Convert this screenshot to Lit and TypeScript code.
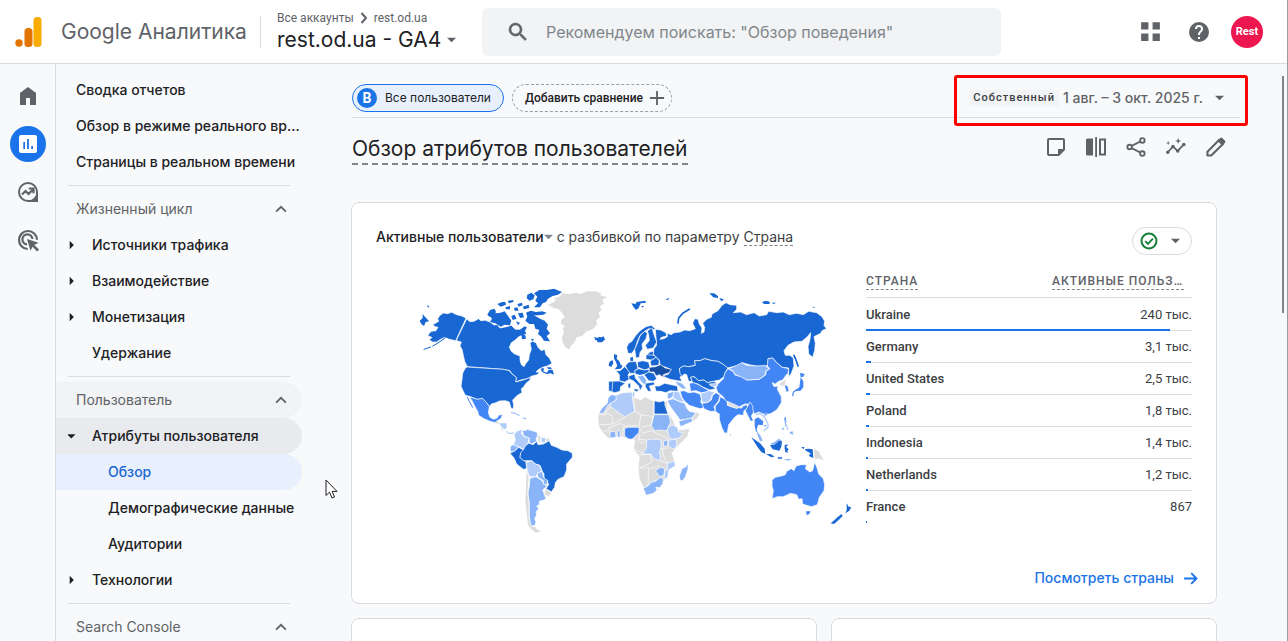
import { LitElement, html, css, svg } from "lit";
import { customElement, property } from "lit/decorators.js";
import { classMap } from "lit/directives/class-map.js";

type NavItem = { label: string; level: number; caret?: "right" | "down"; state?: string };
type NavGroup = { title?: string; active?: boolean; items: NavItem[] };

const NAV: NavGroup[] = [
  {
    items: [
      { label: "Сводка отчетов", level: 0 },
      { label: "Обзор в режиме реального времени", level: 0 },
      { label: "Страницы в реальном времени", level: 0 },
    ],
  },
  {
    title: "Жизненный цикл",
    items: [
      { label: "Источники трафика", level: 1, caret: "right" },
      { label: "Взаимодействие", level: 1, caret: "right" },
      { label: "Монетизация", level: 1, caret: "right" },
      { label: "Удержание", level: 1 },
    ],
  },
  {
    title: "Пользователь",
    active: true,
    items: [
      { label: "Атрибуты пользователя", level: 1, caret: "down", state: "open" },
      { label: "Обзор", level: 2, state: "current" },
      { label: "Демографические данные", level: 2 },
      { label: "Аудитории", level: 2 },
      { label: "Технологии", level: 1, caret: "right" },
    ],
  },
  { title: "Search Console", items: [] },
];

const COUNTRIES = [
  { name: "Ukraine", value: "240 тыс.", share: 93.3 },
  { name: "Germany", value: "3,1 тыс.", share: 1.4 },
  { name: "United States", value: "2,5 тыс.", share: 1.1 },
  { name: "Poland", value: "1,8 тыс.", share: 0.9 },
  { name: "Indonesia", value: "1,4 тыс.", share: 0.7 },
  { name: "Netherlands", value: "1,2 тыс.", share: 0.6 },
  { name: "France", value: "867", share: 0.4 },
];

@customElement("world-map")
class WorldMap extends LitElement {
  static styles = css`
    :host { display: block; }
    svg { display: block; width: 100%; height: auto; }
    path { stroke: #fff; stroke-width: 2; stroke-linejoin: round; }
    .d { fill: #1967d2; }
    .n { fill: #174ea6; }
    .b { fill: #4285f4; }
    .m { fill: #8ab4f8; }
    .l { fill: #aecbfa; }
    .g { fill: #dcdcdc; }
    .w { fill: #fff; }
    .bare { stroke: none; }
    .line { fill: none; stroke-linecap: round; stroke-width: 4; }
    .thin { stroke-width: 3; }
    .thick { stroke-width: 5; }
    .line.ld { stroke: #1967d2; }
    .line.lb { stroke: #4285f4; }
    .line.ll { stroke: #aecbfa; }
    .line.lm { stroke: #8ab4f8; }
    .line.lw { stroke: #fff; stroke-width: 2; }
  `;
  render() {
    return html`<svg viewBox="0 0 1338 780" role="img" aria-label="Активные пользователи по странам">
      ${svg`
      <g>
        <path class="d" d="M168 115L156 108 140 104 125 97 112 101 100 99 90 106 83 116 86 124 76 130 68 134 76 140 84 142 78 152 64 154 56 162 54 168 66 172 58 180 68 186 80 186 92 178 104 172 118 178 137 182Z"/>
        <path class="line thin ld" d="M42 208L62 201M68 198L84 189 106 173"/>
        <path class="d bare" d="M38 102L46 112 52 118 57 124 47 126 42 138 34 132 29 122 38 114ZM50 76l8 3-3 4z"/>
        <path class="d" d="M170 117L180 125 192 124 206 116 212 122 226 121 240 126 252 135 262 134 270 144 290 140 304 136 316 148 330 148 344 138 352 142 346 152 350 162 338 166 326 170 316 180 304 188 298 202 304 214 314 222 330 228 330 240 334 254 342 260 348 250 356 240 358 224 364 208 360 188 368 184 378 188 384 202 394 212 404 208 408 224 418 234 426 250 412 258 398 262 386 268 378 276 388 276 382 284 366 288 352 296 332 300 317 306 319 292 306 282 300 272 280 268 172 260 164 244 160 226 156 208 150 198 154 186 146 184 139 181Z"/>
        <path class="d" d="M166 264L172 261 280 268 298 272 306 282 319 292 317 306 332 302 352 296 362 292 360 300 348 310 340 322 334 326 336 338 322 346 308 360 311 376 309 387 303 384 298 366 286 362 268 363 258 368 244 372 238 380 228 366 218 356 202 358 178 349 166 346 158 330 153 318 156 298 158 280Z"/>
        <path class="d bare" d="M392 266l10-2-2 10 10 4 6-8 12 0 4 14-10-4-12 2-14-6zM410 262l12 0 4 6-10 0z"/>
        <path class="d bare" d="M372 82L384 70 376 62 382 50 372 40 388 30 410 30 432 26 456 36 444 44 428 48 414 56 408 66 398 70 390 82ZM352 44L364 38 374 46 370 58 358 62 350 54ZM232 104L240 90 254 86 258 96 250 108 238 110ZM240 108L256 100 272 98 284 94 294 108 304 122 300 136 284 134 272 140 256 130 240 126 246 116ZM262 72l14-6 10 0 2 8-16 6zM294 62l16-2 0 6-14 4zM286 82l14-4 0 10-12 0zM312 84l10-2 4 10-12 0zM322 72l14-4 2 8-12 4zM338 80l18-6 2 10-16 4zM304 108l10-4 6 12-12 4zM324 100l14-2 4 14-12 2zM318 124l12 4-6 8zM348 98L362 92 378 96 396 94 410 98 400 104 384 106 372 106 390 116 404 122 414 134 410 146 420 160 410 168 420 184 402 182 394 170 384 162 388 150 376 146 372 132 358 132 346 122 352 110ZM334 160l12 6 2 10-12 2zM362 176l10 2-4 6z"/>
        <path class="g bare" d="M414 74L428 68 440 60 430 56 452 48 454 40 480 42 496 38 512 42 530 34 556 34 574 40 570 46 592 52 576 60 582 72 570 78 574 90 566 98 570 110 558 122 562 132 548 148 530 154 516 168 500 172 494 186 484 196 478 208 466 202 458 186 456 172 462 158 458 146 464 138 452 130 454 120 464 110 456 98 446 88 430 84Z"/>
        <path class="d bare" d="M553 170l8 4 6-3 8 1 6-3 4 10-10 8-12 0-3-6-5-2z"/>
      </g>
      <g transform="translate(0 360)">
        <path class="b" d="M178-10L202-2 218-5 230 8 238 20 235 38 240 52 250 58 262 54 266 45 278 44 272 56 262 62 256 68 240 64 222 56 206 46 204 36 194 18 186 2Z"/>
        <path class="line thin lb" d="M172-8L180 8 188 22"/>
        <path class="g bare" d="M256 64l8-4 2 12-8-2zM270 82l10 6 0 6z"/>
        <path class="l bare" d="M268 70L290 70 290 84 284 88 274 80ZM288 92l8 6 12 0 4-4-2 8-12 0-10-6z"/>
        <path class="line thin lm" d="M304 38L316 40 328 47M340 54L348 56"/>
        <path class="l" d="M312 104L320 94 338 88 334 100 342 110 358 114 354 130 346 138 344 152 334 144 320 138 310 134 316 120Z"/>
        <path class="m" d="M336 90L346 92 352 88 380 96 384 106 378 116 380 124 366 132 358 130 358 114 342 108Z"/>
        <path class="g" d="M382 104L394 110 390 130 384 124Z"/>
        <path class="l" d="M394 112L408 114 406 128 394 128Z"/><path class="g" d="M408 114L420 116 416 128 407 127Z"/>
        <path class="m" d="M300 142L308 134 326 140 314 154 302 156Z"/>
        <path class="d" d="M300 160L316 152 326 142 344 152 332 160 330 172 340 182 348 184 350 206 340 208 320 192 312 174Z"/>
        <path class="d" d="M340 150L346 138 356 130 370 134 380 124 384 134 400 132 418 122 424 136 440 142 456 150 474 152 487 160 487 172 470 192 470 210 462 230 444 238 436 248 434 262 424 276 408 266 416 254 412 244 402 238 402 222 396 212 390 196 376 192 366 182 350 182 340 182 330 172 332 158Z"/>
        <path class="l" d="M348 188L364 182 376 192 388 196 396 214 384 218 378 230 358 230 352 212Z"/>
        <path class="m" d="M382 220L396 214 402 234 414 242 410 254 400 254 400 242 384 232Z"/>
        <path class="m" d="M360 234L378 230 398 244 400 252 412 258 398 270 404 284 408 298 388 304 388 314 380 318 386 326 378 336 380 344 374 356 378 366 374 378 362 376 358 350 358 310 354 280 358 256Z"/>
        <path class="g bare" d="M350 212L356 234 354 256 352 280 356 310 356 350 360 374 368 380 378 382 380 388 392 394 378 398 364 388 354 374 350 340 346 300 348 260Z"/>
        <path class="g" d="M406 266L426 278 416 290 402 284Z"/>
      </g>
      <g transform="translate(540 0)">
        <path class="d" d="M196 148L212 150 228 158 230 168 214 172 210 178 222 176 232 170 232 160 244 164 252 158 270 156 284 150 300 152 316 146 308 130 314 116 324 118 328 132 336 144 334 160 342 156 344 142 338 130 350 118 364 112 366 102 384 92 396 76 408 68 420 74 440 76 440 88 430 98 452 96 470 104 492 98 508 108 530 104 536 94 560 98 580 96 598 104 620 100 640 104 656 94 680 98 696 110 704 124 702 136 709 146 696 152 692 160 672 170 676 190 674 212 668 232 656 222 654 200 660 178 662 158 652 170 636 184 612 186 594 196 582 212 586 226 600 226 610 234 612 258 604 280 596 290 596 264 576 262 560 248 548 234 534 236 534 256 516 260 500 258 478 254 456 248 450 256 428 260 412 264 398 252 384 244 366 242 344 236 330 242 314 242 316 256 296 260 280 258 268 266 270 276 278 282 270 292 276 304 262 302 240 298 226 292 218 288 236 282 242 268 228 262 210 256 208 240 196 230 190 222 192 206 200 196Z"/>
        <path class="line thick ld" d="M264 129L266 114 278 100 298 88"/>
        <path class="d bare" d="M124 70L136 72 140 66 166 62 168 68 152 70 146 84 138 90 130 80ZM154 78l8 0-4 5zM226 58l12-4-4 6zM358 40L372 40 384 48 384 54 370 52ZM388 54l14 4-8 6zM516 66l12-4 12 4-2 6-16 0zM544 68l14 0-6 4zM668 80l8 2-6 2z"/>
        <path class="line thick ld" d="M612 226L618 240 624 258"/>
        <path class="d" d="M268 266L280 258 298 260 316 256 314 242 330 242 344 236 366 242 384 244 398 252 414 264 406 276 402 290 388 300 370 304 352 308 342 300 326 302 312 290 302 292 306 304 296 304 290 284 282 282 276 290 270 280Z"/>
        <path class="d" d="M302 292L312 290 326 302 342 300 352 308 372 304 384 312 370 320 376 326 360 330 340 322 324 312 308 308Z"/>
        <path class="b" d="M298 310L310 308 326 314 342 324 356 330 350 336 334 338 318 332 302 334Z"/>
        <path class="l" d="M358 312L384 310 376 320 362 318Z"/>
        <path class="b" d="M414 266L428 274 436 286 456 290 470 300 508 298 528 284 528 274 540 266 532 258 534 236 548 234 560 248 576 262 596 266 594 280 588 286 578 300 566 304 556 312 546 308 552 320 564 318 562 328 574 350 574 368 560 390 540 402 520 402 506 396 494 402 484 386 478 372 464 372 446 382 424 374 406 362 400 350 384 338 378 324 384 312 400 296 404 280Z"/>
        <path class="m" d="M416 266L440 256 456 248 470 256 500 258 524 256 538 266 526 274 526 284 508 298 470 300 452 290 436 284 428 272Z"/>
        <path class="d" d="M110 202L116 190 126 184 136 168 150 152 168 140 184 136 196 146 188 150 176 146 164 154 150 166 142 184 136 204 126 220 114 220Z"/>
        <path class="d" d="M134 208L142 190 150 168 164 154 172 160 168 176 156 192 158 206 150 218 148 232 138 234Z"/>
        <path class="d" d="M172 152L186 144 192 164 200 186 190 204 172 208 166 196 178 182 176 164Z"/>
        <path class="d bare" d="M72 222L82 226 80 236 88 244 92 254 98 258 92 266 74 268 82 258 78 246 72 236ZM58 246L68 240 70 250 64 260 56 258Z"/>
        <path class="d bare" d="M120 234l8-4 2 12-8 2z"/>
        <path class="d" d="M78 272L90 272 104 260 120 276 114 286 118 298 104 306 88 302 88 284Z"/>
        <path class="d" d="M56 304L88 303 106 310 92 320 90 334 74 338 56 332Z"/><path class="line lw" d="M68 306L66 334"/>
        <path class="d" d="M106 258L116 246 138 244 144 266 134 272 138 280 120 280 112 268Z"/>
        <path class="d" d="M142 246L158 242 176 246 180 264 164 270 144 262Z"/>
        <path class="d" d="M168 226L180 216 190 214 190 224 200 232 184 240 168 238Z"/><path class="line lw" d="M170 224L192 226"/>
        <path class="d" d="M180 244L198 232 208 242 206 256 184 258Z"/>
        <path class="n" d="M178 262L196 260 212 254 226 264 244 268 238 278 220 284 220 292 208 284 198 288 192 276 176 276Z"/>
        <path class="d" d="M134 272L146 266 164 270 178 268 174 280 150 286 136 282Z"/>
        <path class="d" d="M116 288L134 282 136 294 148 308 158 318 150 332 146 318 130 302 118 298ZM132 326l14 2-4 8-10-4zM114 310h8v14h-8z"/>
        <path class="m" d="M142 288L160 286 170 302 166 316 154 306Z"/>
        <path class="d" d="M162 284L176 276 192 280 200 296 190 304 176 302Z"/>
        <path class="d" d="M166 310L192 306 194 314 178 318 184 334 174 334 166 320Z"/>
        <path class="d" d="M194 318L208 318 224 310 244 314 262 318 264 334 240 332 228 338 212 334 198 334Z"/>
        <path class="m" d="M254 302L276 310 284 318 290 328 276 326 262 314Z"/>
        <path class="b bare" d="M630 278l14 4-4 8-8 2zM632 292L640 304 640 322 632 332 616 334 606 344 610 334 628 322ZM606 338l6 6-4 6zM584 316l8 2 4 14-6 4z"/>
        <path class="g bare" d="M568 312L588 298 584 316 576 318Z"/>
        <path class="b bare" d="M582 416l6-6 0 10z"/>
      </g>
      <g transform="translate(540 300)">
        <path class="b" d="M270 34L282 32 296 38 312 36 330 42 334 56 332 66 344 82 330 86 316 82 298 76 284 64 276 52Z"/>
        <path class="l" d="M332 40L348 36 356 32 374 36 366 46 362 60 350 68 336 66Z"/>
        <path class="b" d="M336 70L352 68 364 60 368 46 378 38 390 46 386 62 372 80 376 94 360 94 342 86Z"/>
        <path class="b" d="M376 94L376 78 388 64 390 50 402 56 412 66 412 76 436 84 452 80 470 74 474 84 462 92 460 106 444 104 434 112 416 134 412 158 404 160 396 144 388 118 388 102Z"/>
        <path class="g" d="M412 64L444 78 442 86 414 76ZM446 80l12-2-2 6-8 0z"/>
        <path class="g bare" d="M418 160l6 2-2 8z"/>
        <path class="m" d="M232 40L252 34 250 48 240 56 232 56Z"/>
        <path class="l" d="M252 34L268 36 274 52 284 68 264 62 248 54Z"/>
        <path class="m" d="M232 62L248 56 266 64 284 70 290 84 298 94 318 98 306 114 286 118 270 120 262 108 250 92 240 78Z"/>
        <path class="m" d="M266 124L286 118 306 114 308 124 290 132 272 140Z"/>
        <path class="g" d="M310 90L330 102 320 118 308 124 306 114 318 100Z"/>
        <path class="g" d="M24 104L34 86 54 76 66 60 104 56 130 50 152 60 166 50 178 58 192 62 232 64 232 92 240 106 250 122 262 150 300 146 292 170 262 200 246 220 254 244 236 264 232 290 218 308 214 318 190 340 166 346 160 322 148 296 144 262 148 232 130 206 134 184 128 172 104 174 86 168 56 176 36 156 26 138 24 122Z"/>
        <path class="l" d="M60 72L78 60 76 46 100 38 126 36 128 60 134 94 104 110 62 80Z"/>
        <path class="m" d="M26 102L36 84 52 70 54 54 64 44 78 46 78 60 58 72 50 82 42 98Z"/>
        <path class="m" d="M128 36L134 38 132 54 128 50Z"/>
        <path class="d" d="M192 62L208 66 222 62 228 76 224 72 234 102 192 102Z"/>
        <path class="m" d="M192 104L236 104 242 126 230 152 208 150 194 152 184 136Z"/>
        <path class="b" d="M104 146L114 142 148 142 146 158 136 168 126 178 114 176 104 168Z"/>
        <path class="m" d="M60 156L76 154 78 172 60 174ZM82 152l8 0 0 20-8 0z"/>
        <path class="l" d="M170 180L184 178 212 178 214 200 208 218 212 232 206 242 190 234 182 222 158 222 170 202Z"/>
        <path class="l" d="M232 146L246 134 262 142 266 156 280 158 268 174 246 178 236 168Z"/>
        <path class="l" d="M236 180L258 178 260 196 252 208 236 200Z"/><path class="m" d="M222 182L234 180 232 198 220 198Z"/>
        <path class="l" d="M232 250L254 244 256 258 236 270 234 290 222 300 224 276 232 268Z"/>
        <path class="m" d="M196 272L212 262 224 266 222 284 210 290Z"/>
        <path class="m" d="M160 324L174 318 184 304 196 304 212 292 220 298 218 312 206 326 190 340 168 346Z"/>
        <path class="m" d="M268 288L276 266 288 260 294 250 294 268 286 290 278 302 270 300Z"/>
        <path class="line lw" d="M26 104H46V96L62 82M46 98L66 108 68 132 30 134M70 132L104 112M104 138L92 130 60 142M134 94L152 104 150 122 146 138 104 138M132 54L134 94M152 104L190 110M192 62V104M190 110L184 134 156 142M148 142L158 160 184 152 222 170 234 176M150 162L146 178 168 180M146 184L158 190 168 182M130 206L158 220M146 224L182 224 184 248 148 264M148 264H192L208 256M176 268L174 306M170 316L200 300M214 206L232 204M216 204L220 226 232 250M210 242L228 248M56 142L60 156M100 142L98 172M38 156L54 150"/>
        <path class="w bare" d="M196 322l8-2 4 4-8 6z"/>
        <path class="b" d="M466 92L480 66 488 78 490 98 484 108 490 122 482 124 474 108Z"/>
        <path class="b bare" d="M494 118L504 112 520 124 518 136 504 134 500 150 506 162 498 154 494 138Z"/>
        <path class="line ll" d="M500 104L510 100 524 112 534 132 534 142 522 152"/>
        <path class="m bare" d="M500 158L510 164 518 182 510 184ZM520 136l10-2-2 8zM520 98l14 6-10 4z"/>
        <path class="d bare" d="M484 172L496 180 510 190 524 206 526 222 514 216 502 200ZM528 222L542 222 554 230 544 232ZM540 196L552 194 566 182 576 184 574 200 568 212 548 208ZM584 194l12 0-8 6 8 8-4 4 2 6-8-2-2-10zM634 200l10 2-4 6zM644 208L656 206 668 208 670 234 656 228 662 220 650 214ZM562 232l14 0 0 4-12 0z"/>
        <path class="m bare" d="M540 192L554 186 566 176 576 182 566 184 552 196ZM582 116L590 120 588 132 594 142 586 138ZM598 156l10-2 2 10-8-2zM590 142l6 4-4 4zM574 148l10-8-4 10zM580 238l24-2-8 6z"/>
        <path class="g bare" d="M672 208L686 214 692 226 702 242 690 236 674 236Z"/>
        <path class="b" d="M546 300L556 292 574 288 586 284 590 274 604 266 612 272 618 258 634 254 650 254 646 266 660 276 668 272 674 246 682 266 686 282 700 296 704 314 702 332 688 352 682 374 664 380 650 376 638 372 636 356 626 358 620 344 602 340 580 350 562 350 546 356 550 332 546 318Z"/>
        <path class="b bare" d="M648 394l14 0-4 8-8 4z"/>
        <path class="d bare" d="M770 370L776 380 784 382 778 392 766 400 770 390ZM722 430L740 414 754 402 758 408 746 420 732 432Z"/>
      </g>`}
    </svg>`;
  }
}

const icon = (body: unknown, size = 24, box = "0 0 24 24") =>
  html`<svg class="ico" width=${size} height=${size} viewBox=${box} aria-hidden="true">${body}</svg>`;

const I = {
  home: svg`<path d="M4 21V9l8-6 8 6v12h-6v-7h-4v7z"/>`,
  chart: svg`<path d="M19 3H5a2 2 0 0 0-2 2v14c0 1.100.9 2 2 2h14a2 2 0 0 0 2-2V5a2 2 0 0 0-2-2zM9 17H7.300v-7H9zm3.900 0h-1.800V7h1.800zm4.100 0h-1.800v-3H17z"/>`,
  explore: svg`<path d="M12 3a9 9 0 1 0 0 18h9v-9a9 9 0 0 0-9-9z" fill="none" stroke="currentColor" stroke-width="2"/><path d="M6 14.500l3.500-3.500 3 3 4.500-4.500M12.800 8.500h4.700v4.700" fill="none" stroke="currentColor" stroke-width="2.200"/><path d="M20 15v5h-5l3-2z"/>`,
  ads: svg`<path d="M11.700 21A9 9 0 1 1 21 11.700M11 16.400A5 5 0 1 1 16.400 11" fill="none" stroke="currentColor" stroke-width="2.200"/><path d="M11 11l11.500 3.800-4.200 2.100 4.700 4.700-1.800 1.800-4.700-4.700-2 4.100z"/>`,
  search: svg`<path d="M15.500 14h-.79l-.28-.27A6.470 6.470 0 0 0 16 9.500 6.500 6.500 0 1 0 9.500 16c1.610 0 3.090-.59 4.230-1.570l.27.28v.79l5 4.990L20.490 19zm-6 0C7.010 14 5 11.990 5 9.500S7.010 5 9.500 5 14 7.010 14 9.500 11.990 14 9.500 14z" stroke="currentColor" stroke-width=".6"/>`,
  apps: svg`<path d="M3 3h7v7H3zM14 3h7v7h-7zM3 14h7v7H3zM14 14h7v7h-7z"/>`,
  help: svg`<path d="M12 2a10 10 0 1 0 0 20 10 10 0 0 0 0-20zm1 17h-2v-2h2zm2.070-7.750l-.9.920C13.450 12.900 13 13.500 13 15h-2v-.5c0-1.100.45-2.100 1.170-2.830l1.240-1.260c.37-.36.59-.86.59-1.410a2 2 0 1 0-4 0H8a4 4 0 1 1 8 0c0 .88-.36 1.680-.93 2.250z"/>`,
  note: svg`<path d="M19 5v9h-5v5H5V5zm0-2H5a2 2 0 0 0-2 2v14c0 1.100.9 2 2 2h10l6-6V5a2 2 0 0 0-2-2z"/>`,
  compare: svg`<path d="M2 5a1.500 1.500 0 0 1 1.500-1.500H9v17H3.500A1.500 1.500 0 0 1 2 19zM11.200 2h1.800v20h-1.800z"/><path d="M16 4.500h5v15h-5z" fill="none" stroke="currentColor" stroke-width="2"/>`,
  share: svg`<path d="M18.500 5L5 12l13.500 7" fill="none" stroke="currentColor" stroke-width="2"/><g fill="#f8f9fa" stroke="currentColor" stroke-width="2"><circle cx="19" cy="4.800" r="2.500"/><circle cx="5" cy="12" r="2.500"/><circle cx="19" cy="19.200" r="2.500"/></g>`,
  insights: svg`<path d="M3 18.500l6-6.500 5.500 5L21.500 9.500" fill="none" stroke="currentColor" stroke-width="2"/><circle cx="3" cy="18.500" r="2"/><circle cx="9" cy="12" r="2"/><circle cx="14.500" cy="17" r="2"/><circle cx="21.500" cy="9.500" r="2"/><path d="M15 2l.9 2.600L18.500 5.500l-2.600.9L15 9l-.9-2.600-2.600-.9 2.600-.9zM3.500 5.500l.6 1.900L6 8l-1.900.6-.6 1.900-.6-1.900L1 8l1.900-.6z"/>`,
  pencil: svg`<path d="M3.500 20.500v-4L16 4l4 4L7.500 20.500z" fill="none" stroke="currentColor" stroke-width="2.200" stroke-linejoin="round"/><path d="M14 5l3-3q1-.8 2 0l3 3q.8 1 0 2l-3 3z"/>`,
  plus: svg`<path d="M12 3.500v17M3.500 12h17" fill="none" stroke="currentColor" stroke-width="2.200"/>`,
  check: svg`<circle cx="12" cy="12" r="9" fill="none" stroke="currentColor" stroke-width="2.400"/><path d="M7.500 12.200l3.200 3.200 6-6.200" fill="none" stroke="currentColor" stroke-width="2.200"/>`,
  arrow: svg`<path d="M3 12h17M13 4.500l7.500 7.500-7.500 7.500" fill="none" stroke="currentColor" stroke-width="2.600"/>`,
  up: svg`<path d="M5.500 15.500l6.500-6.500 6.500 6.500" fill="none" stroke="currentColor" stroke-width="2.400"/>`,
  gt: svg`<path d="M7 2l9 10-9 10" fill="none" stroke="currentColor" stroke-width="4"/>`,
  down: svg`<path d="M0 0h10L5 5z"/>`,
  right: svg`<path d="M0 0v10l5-5z"/>`,
};

@customElement("report-nav")
class ReportNav extends LitElement {
  @property({ attribute: false }) groups: NavGroup[] = [];
  static styles = css`
    :host { display: block; padding-top: 8px; }
    .group + .group { margin-top: 5px; }
    .rule { border: 0; border-top: 1px solid #dadce0; margin: 0 12px 5px; }
    a, button {
      box-sizing: border-box; display: flex; align-items: center; width: 100%; height: 36px;
      padding: 0 0 0 20px; border: 0; background: none; border-radius: 0 18px 18px 0;
      font: 500 14px/20px Inter, "Noto Sans", sans-serif; color: #202124; text-decoration: none; text-align: left;
    }
    button { justify-content: space-between; padding-right: 12px; color: #5f6368; font-weight: 400; }
    .hover { background: #f1f3f4; }
    .open { background: #e8eaed; }
    .current { background: #e8f0fe; color: #1967d2; }
    .text { overflow: hidden; text-overflow: ellipsis; white-space: nowrap; }
    .caret { width: 16px; margin-left: -8px; padding-right: 8px; display: flex; flex: none; }
    .l1 .text.bare { padding-left: 16px; }
    .l2 { padding-left: 52px; }
    svg { fill: currentColor; display: block; }
  `;
  render() {
    return html`${this.groups.map(
      (g, i) => html`<div class="group">
        ${i ? html`<hr class="rule" />` : ""}
        ${g.title ? html`<button class=${classMap({ hover: !!g.active })} aria-expanded="true"><span>${g.title}</span>${icon(I.up, 18)}</button>` : ""}
        ${g.items.map(
          (it) => html`<a href="#" class=${`l${it.level} ${it.state ?? ""}`}>
            ${it.caret
              ? html`<span class="caret">${it.caret === "right" ? icon(I.right, 10, "-2 -1 12 12") : icon(I.down, 10, "1 -4 12 12")}</span>`
              : ""}
            <span class=${classMap({ text: true, bare: !it.caret })}>${it.label}</span></a>`
        )}
      </div>`
    )}`;
  }
}

@customElement("country-table")
class CountryTable extends LitElement {
  static styles = css`
    :host { display: block; }
    table { width: 100%; border-collapse: collapse; table-layout: fixed; font: 400 13px/16px Roboto, sans-serif; color: #3c4043; }
    th, td { padding: 0; text-align: left; font-weight: 500; }
    thead th { height: 32px; box-sizing: border-box; border-bottom: 1px solid #dadce0; font-size: 12px; letter-spacing: 1px; color: #5f6368; vertical-align: top; }
    thead th:last-child { text-align: right; padding-right: 8px; }
    .term { display: inline-block; max-width: 132px; margin-top: 8px; border-bottom: 1px dashed #80868b; overflow: hidden; text-overflow: ellipsis; white-space: nowrap; vertical-align: top; }
    td { text-align: right; font-weight: 400; }
    tbody tr.row > * { height: 31px; box-sizing: border-box; }
    tbody tr.row:first-child > * { height: 33px; padding-top: 2px; }
    .track td { height: 1px; background: #dadce0; vertical-align: top; line-height: 0; }
    .track:last-child td { background: none; }
    .wrap { height: 1px; }
    .bar { height: 2px; margin-top: -1px; background: #1a73e8; }
  `;
  render() {
    return html`<table>
      <thead>
        <tr><th scope="col"><span class="term">СТРАНА</span></th><th scope="col"><span class="term">АКТИВНЫЕ ПОЛЬЗОВАТЕЛИ</span></th></tr>
      </thead>
      <tbody>
        ${COUNTRIES.map(
          (c) => html`<tr class="row"><th scope="row">${c.name}</th><td>${c.value}</td></tr>
            <tr class="track"><td colspan="2"><div class="wrap"><div class="bar" style="width:${c.share}%"></div></div></td></tr>`
        )}
      </tbody>
    </table>`;
  }
}

@customElement("app-root")
class AppRoot extends LitElement {
  static styles = css`
    :host {
      display: flex; flex-direction: column; height: 100vh; overflow: hidden; position: relative; box-sizing: border-box;
      border-right: 1px solid #9a9c9e; background: #f8f9fa; color: #202124;
      --brand: Inter, "Noto Sans", sans-serif;
      font: 400 14px/20px var(--brand);
    }
    * { box-sizing: border-box; }
    button { font: inherit; color: inherit; border: 0; background: none; padding: 0; display: flex; align-items: center; }
    a { color: inherit; text-decoration: none; }
    .ico { fill: currentColor; display: block; flex: none; }
    header { height: 64px; flex: none; display: flex; align-items: center; background: #fff; border-bottom: 1px solid #dadce0; padding: 0 24px 0 15px; }
    .brand { font-size: 21px; line-height: 32px; color: #5f6368; margin-left: 18px; width: 184px; white-space: nowrap; }
    .account { margin-left: 15px; padding-left: 17px; background: linear-gradient(#dadce0, #dadce0) 0 50% / 1px 32px no-repeat; flex: none; width: 205px; height: 48px; }
    .crumbs { display: flex; align-items: center; gap: 4px; font: 400 12px/16px Roboto, sans-serif; color: #5f6368; padding-top: 2px; }
    .property { font-size: 21px; line-height: 28px; gap: 6px; white-space: nowrap; }
    .property .ico { color: #5f6368; }
    .search { width: 519px; flex: 0 1 auto; margin-left: 17px; height: 48px; background: #f1f3f4; border-radius: 6px; display: flex; align-items: center; gap: 16px; padding-left: 24px; color: #5f6368; }
    .search input { flex: 1; min-width: 0; border: 0; background: none; padding: 0; font: 400 16px/24px var(--brand); color: #3c4043; }
    .search input::placeholder { color: #80868b; opacity: 1; }
    .tools { margin-left: auto; display: flex; align-items: center; gap: 24px; color: #5f6368; }
    .avatar { width: 32px; height: 32px; border-radius: 50%; background: #ed174f; color: #fff; justify-content: center; font: 700 11px/16px Roboto, sans-serif; margin-left: -4px; }
    .body { flex: 1; display: flex; min-height: 0; }
    .rail { width: 56px; flex: none; border-right: 1px solid #dadce0; padding-top: 14px; display: flex; flex-direction: column; align-items: center; gap: 12px; color: #5f6368; }
    .rail button { width: 36px; height: 36px; border-radius: 50%; justify-content: center; }
    .rail .on { background: #1a73e8; color: #fff; }
    report-nav { width: 246px; flex: none; }
    main { flex: 1; min-width: 0; padding: 0 46px 0 49px; }
    .bar { height: 54px; display: flex; align-items: center; gap: 8px; border-bottom: 1px solid #dadce0; padding-top: 14px; margin: 0 1px; }
    .chip { height: 28px; border-radius: 14px; font-size: 12px; line-height: 16px; white-space: nowrap; }
    .chip.all { border: 1px solid #1a73e8; background: #e8f0fe; padding: 0 12px 0 4px; gap: 8px; }
    .letter { width: 20px; height: 20px; border-radius: 50%; background: #1a73e8; color: #fff; display: grid; place-items: center; font: 700 14px/20px Roboto, sans-serif; }
    .chip.add { border: 1px dashed #9aa0a6; padding: 0 4px 0 12px; gap: 4px; font: 500 12px/16px Roboto, sans-serif; }
    .chip.add .ico { color: #5f6368; }
    .date { position: relative; margin-left: auto; gap: 4px; height: 28px; padding-right: 15px; font-weight: 500; color: #5f6368; white-space: nowrap; }
    .date::after { content: ""; position: absolute; inset: -9px -8px -14px -15px; border: 3px solid #f00; border-radius: 3px; }
    .badge { background: #f1f3f4; border-radius: 2px; padding: 0 4px; font: 500 11px/16px Roboto, sans-serif; letter-spacing: 1px; color: #3c4043; }
    .date .ico { margin-left: 8px; }
    .content { padding-right: 24px; }
    .heading { display: flex; align-items: center; justify-content: space-between; height: 64px; padding-left: 1px; margin-right: -9px; padding-bottom: 6px; }
    h1 { margin: 6px 0 0; font-size: 21px; line-height: 28px; font-weight: 400; border-bottom: 2px dashed #80868b; }
    .actions { display: flex; gap: 20px; color: #5f6368; }
    .card { background: #fff; border: 1px solid #dadce0; border-radius: 8px; }
    .overview { margin-top: 20px; padding: 24px 24px 13px; height: 402px; display: flex; flex-direction: column; }
    .cardhead { display: flex; justify-content: space-between; align-items: center; height: 28px; }
    h2 { margin: 0; font-size: 14px; line-height: 20px; font-weight: 400; color: #3c4043; display: flex; align-items: center; padding-bottom: 8px; }
    h2 button { font-weight: 500; color: #202124; margin-right: 4px; }
    h2 a { border-bottom: 1px dashed #80868b; margin-left: 4px; line-height: 16px; }
    h2 .ico { color: #80868b; }
    .status { width: 60px; height: 28px; border: 1px solid #dadce0; border-radius: 14px; justify-content: space-between; padding: 0 10px 0 6px; color: #5f6368; }
    .ok { color: #188038; }
    .split { flex: 1; display: grid; grid-template-columns: 446px minmax(0, 1fr); column-gap: 10px; padding-left: 34px; }
    world-map { margin-top: 25px; }
    country-table { margin-top: 10px; }
    .more { align-self: flex-end; display: flex; align-items: center; gap: 8px; font-weight: 500; color: #1a73e8; line-height: 24px; margin-right: -7px; }
    .row2 { display: grid; grid-template-columns: 466fr 386fr; gap: 14px; margin-top: 14px; }
    .row2 .card { height: 120px; }
    .thumb { position: absolute; right: 3px; top: 76px; width: 2px; height: 237px; background: #80868b; }
    .cursor { position: absolute; left: 325px; top: 479px; }
  `;
  render() {
    return html`
      <header>
        <svg class="ico" width="28" height="30" viewBox="0 0 28 30" aria-hidden="true">
          <rect x="18.500" y="0" width="8" height="30" rx="3.500" fill="#f9ab00" /><rect x="9.500" y="11" width="8" height="19" rx="3.500" fill="#e37400" /><circle cx="4" cy="26" r="3.700" fill="#e37400" />
        </svg>
        <div class="brand">Google Аналитика</div>
        <div class="account">
          <div class="crumbs"><span>Все аккаунты</span>${icon(I.gt, 12)}<a href="#">rest.od.ua</a></div>
          <button class="property">rest.od.ua - GA4 ${icon(I.down, 10, "0 -3 11 11")}</button>
        </div>
        <div class="search">${icon(I.search)}<input type="search" aria-label="Поиск" placeholder='Рекомендуем поискать: "Обзор поведения"' /></div>
        <div class="tools">
          <button aria-label="Приложения">${icon(I.apps, 25)}</button>
          <button aria-label="Справка">${icon(I.help)}</button>
          <button class="avatar">Rest</button>
        </div>
      </header>
      <div class="body">
        <div class="rail">
          <button aria-label="Главная">${icon(I.home, 24)}</button>
          <button class="on" aria-label="Отчеты">${icon(I.chart)}</button>
          <button aria-label="Исследования">${icon(I.explore)}</button>
          <button aria-label="Реклама">${icon(I.ads)}</button>
        </div>
        <report-nav .groups=${NAV}></report-nav>
        <main>
          <div class="bar">
            <button class="chip all"><span class="letter">В</span>Все пользователи</button>
            <button class="chip add">Добавить сравнение ${icon(I.plus, 20)}</button>
            <button class="date"><span class="badge">Собственный</span><span>1 авг. – 3 окт. 2025 г.</span>${icon(I.down, 10, "0 -3 11 11")}</button>
          </div>
          <div class="content">
            <div class="heading">
              <h1>Обзор атрибутов пользователей</h1>
              <div class="actions">
                <button aria-label="Заметка">${icon(I.note, 20, "2 2 20 20")}</button>
                <button aria-label="Сравнить">${icon(I.compare, 20, "2 2 20 20")}</button>
                <button aria-label="Поделиться">${icon(I.share, 20, "1 1 22 22")}</button>
                <button aria-label="Аналитика">${icon(I.insights, 20, "1 1 23 23")}</button>
                <button aria-label="Изменить">${icon(I.pencil, 20, "2 1 21 21")}</button>
              </div>
            </div>
            <section class="card overview">
              <div class="cardhead">
                <h2><button>Активные пользователи${icon(I.down, 9, "0 -2 10 10")}</button>с разбивкой по параметру <a href="#">Страна</a></h2>
                <button class="status" aria-label="Качество данных"><span class="ok">${icon(I.check, 20)}</span>${icon(I.down, 11, "-1 -3 12 12")}</button>
              </div>
              <div class="split"><world-map></world-map><country-table></country-table></div>
              <a class="more" href="#">Посмотреть страны ${icon(I.arrow, 17)}</a>
            </section>
            <div class="row2"><section class="card"></section><section class="card"></section></div>
          </div>
        </main>
      </div>
      <div class="thumb"></div>
      <svg class="cursor" width="13" height="20" viewBox="0 0 13 20" aria-hidden="true"><path d="M1 1v15.500l3.500-3.300L7 19l2.500-1-2.400-5.600H12z" fill="#fff" stroke="#202124" /></svg>
    `;
  }
}
